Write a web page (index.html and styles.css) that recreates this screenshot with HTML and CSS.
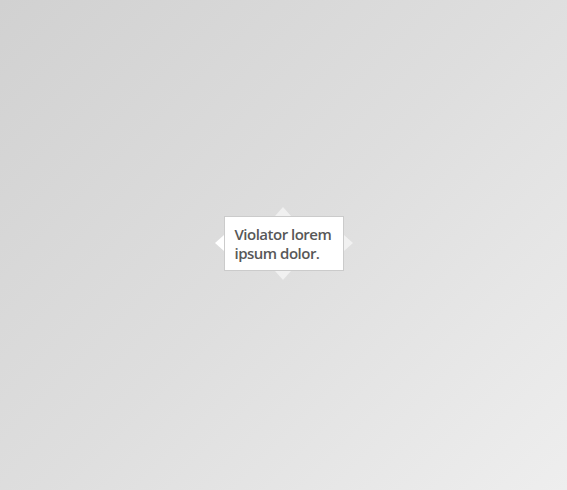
FILE: index.html
```html
<!DOCTYPE html>
<html>
<head>
<meta charset="utf-8">
<link rel="stylesheet" href="styles.css">
</head>
<body>
<div class="stage">
  <div class="tip">
    <span class="arrow arrow-left"></span>
    <span class="arrow arrow-top"></span>
    <span class="arrow arrow-right"></span>
    <span class="arrow arrow-bottom"></span>
    <p class="tip-text">Violator lorem<br>ipsum dolor.</p>
  </div>
</div>
</body>
</html>
```
FILE: styles.css
```css
html, body {
  margin: 0;
  height: 100%;
}
body {
  background: linear-gradient(135deg, #d1d1d1 0%, #dedede 50%, #eeeeee 100%);
}
.stage {
  height: 100%;
  display: flex;
  align-items: center;
  justify-content: center;
  padding-bottom: 3px;
  box-sizing: border-box;
}
.tip {
  position: relative;
  width: 108px;
  height: 53px;
  padding: 0 0 0 10px;
  background: #fff;
  border: 1px solid #cbcbcb;
  box-sizing: content-box;
}
.tip-text {
  margin: 8px 0 0 0;
  font-family: "Open Sans", sans-serif;
  font-weight: 600;
  font-size: 15px;
  line-height: 19px;
  color: #585858;
  letter-spacing: -0.5px;
  white-space: nowrap;
}
.arrow {
  position: absolute;
  width: 0;
  height: 0;
  border-style: solid;
}
.arrow-left {
  left: -10px;
  top: 18px;
  border-width: 8px 9px 8px 0;
  border-color: transparent #fff transparent transparent;
}
.arrow-right {
  right: -10px;
  top: 18px;
  border-width: 8px 0 8px 9px;
  border-color: transparent transparent transparent rgba(255,255,255,0.55);
}
.arrow-top {
  top: -10px;
  left: 50px;
  border-width: 0 8px 9px 8px;
  border-color: transparent transparent rgba(255,255,255,0.55) transparent;
}
.arrow-bottom {
  bottom: -10px;
  left: 50px;
  border-width: 9px 8px 0 8px;
  border-color: rgba(255,255,255,0.55) transparent transparent transparent;
}
```
